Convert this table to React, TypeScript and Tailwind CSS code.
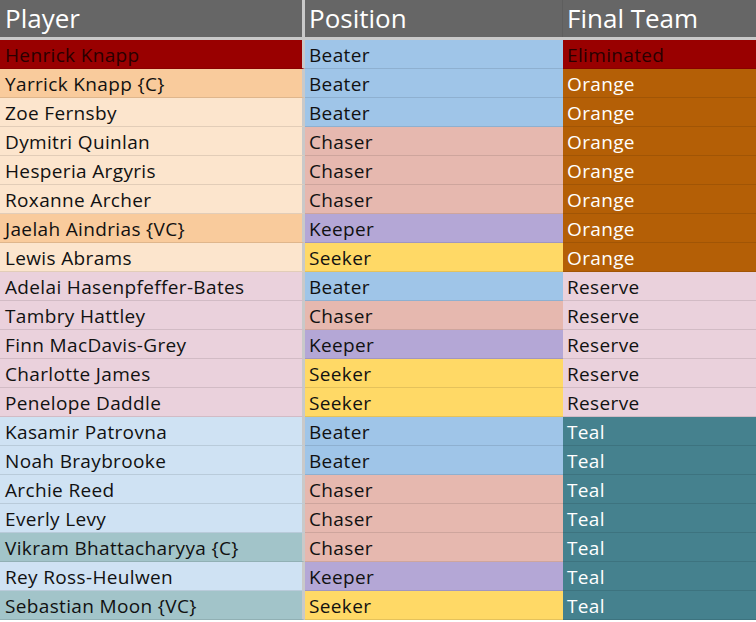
type Row = {
  name: string;
  nameBg: string;
  position: 'Beater' | 'Chaser' | 'Keeper' | 'Seeker';
  team: string;
};

const positionBg: Record<Row['position'], string> = {
  Beater: 'bg-[#9fc5e8]',
  Chaser: 'bg-[#e6b8af]',
  Keeper: 'bg-[#b4a7d6]',
  Seeker: 'bg-[#ffd966]',
};

const teamStyle: Record<string, string> = {
  Eliminated: 'bg-[#990000] text-[#2a0000]',
  Orange: 'bg-[#b45f06] text-white',
  Reserve: 'bg-[#ead1dc] text-[#111111]',
  Teal: 'bg-[#45818e] text-white',
};

const rows: Row[] = [
  { name: 'Henrick Knapp', nameBg: 'bg-[#990000] text-[#2a0000]', position: 'Beater', team: 'Eliminated' },
  { name: 'Yarrick Knapp {C}', nameBg: 'bg-[#f9cb9c]', position: 'Beater', team: 'Orange' },
  { name: 'Zoe Fernsby', nameBg: 'bg-[#fce5cd]', position: 'Beater', team: 'Orange' },
  { name: 'Dymitri Quinlan', nameBg: 'bg-[#fce5cd]', position: 'Chaser', team: 'Orange' },
  { name: 'Hesperia Argyris', nameBg: 'bg-[#fce5cd]', position: 'Chaser', team: 'Orange' },
  { name: 'Roxanne Archer', nameBg: 'bg-[#fce5cd]', position: 'Chaser', team: 'Orange' },
  { name: 'Jaelah Aindrias {VC}', nameBg: 'bg-[#f9cb9c]', position: 'Keeper', team: 'Orange' },
  { name: 'Lewis Abrams', nameBg: 'bg-[#fce5cd]', position: 'Seeker', team: 'Orange' },
  { name: 'Adelai Hasenpfeffer-Bates', nameBg: 'bg-[#ead1dc]', position: 'Beater', team: 'Reserve' },
  { name: 'Tambry Hattley', nameBg: 'bg-[#ead1dc]', position: 'Chaser', team: 'Reserve' },
  { name: 'Finn MacDavis-Grey', nameBg: 'bg-[#ead1dc]', position: 'Keeper', team: 'Reserve' },
  { name: 'Charlotte James', nameBg: 'bg-[#ead1dc]', position: 'Seeker', team: 'Reserve' },
  { name: 'Penelope Daddle', nameBg: 'bg-[#ead1dc]', position: 'Seeker', team: 'Reserve' },
  { name: 'Kasamir Patrovna', nameBg: 'bg-[#cfe2f3]', position: 'Beater', team: 'Teal' },
  { name: 'Noah Braybrooke', nameBg: 'bg-[#cfe2f3]', position: 'Beater', team: 'Teal' },
  { name: 'Archie Reed', nameBg: 'bg-[#cfe2f3]', position: 'Chaser', team: 'Teal' },
  { name: 'Everly Levy', nameBg: 'bg-[#cfe2f3]', position: 'Chaser', team: 'Teal' },
  { name: 'Vikram Bhattacharyya {C}', nameBg: 'bg-[#a2c4c9]', position: 'Chaser', team: 'Teal' },
  { name: 'Rey Ross-Heulwen', nameBg: 'bg-[#cfe2f3]', position: 'Keeper', team: 'Teal' },
  { name: 'Sebastian Moon {VC}', nameBg: 'bg-[#a2c4c9]', position: 'Seeker', team: 'Teal' },
];

const cell = 'h-[29px] border-b border-black/10 pt-[2px] flex items-center leading-none';

export default function App() {
  return (
    <div
      className="w-[756px] h-[622px] bg-white text-[19px] tracking-[0.35px] text-[#111111] overflow-hidden"
      style={{ fontFamily: '"Open Sans", "Noto Sans", sans-serif' }}
    >
      {/* Header */}
      <div className="flex h-[40px] border-b-[3px] border-[#c9c9c9] bg-[#666666] text-white text-[26px] tracking-normal">
        <div className="w-[305px] border-r-[3px] border-[#c9c9c9] pl-[5px] flex items-center">Player</div>
        <div className="w-[258px] border-r border-[#5e5e5e] pl-[4px] flex items-center">Position</div>
        <div className="flex-1 pl-[4px] flex items-center">Final Team</div>
      </div>

      {/* Rows */}
      {rows.map((r) => (
        <div key={r.name} className="flex">
          <div className={`w-[305px] border-r-[3px] border-r-[#c9c9c9] pl-[5px] ${cell} ${r.nameBg}`}>{r.name}</div>
          <div className={`w-[258px] pl-[4px] ${cell} ${positionBg[r.position]}`}>{r.position}</div>
          <div className={`flex-1 pl-[4px] ${cell} ${teamStyle[r.team]}`}>{r.team}</div>
        </div>
      ))}
    </div>
  );
}
